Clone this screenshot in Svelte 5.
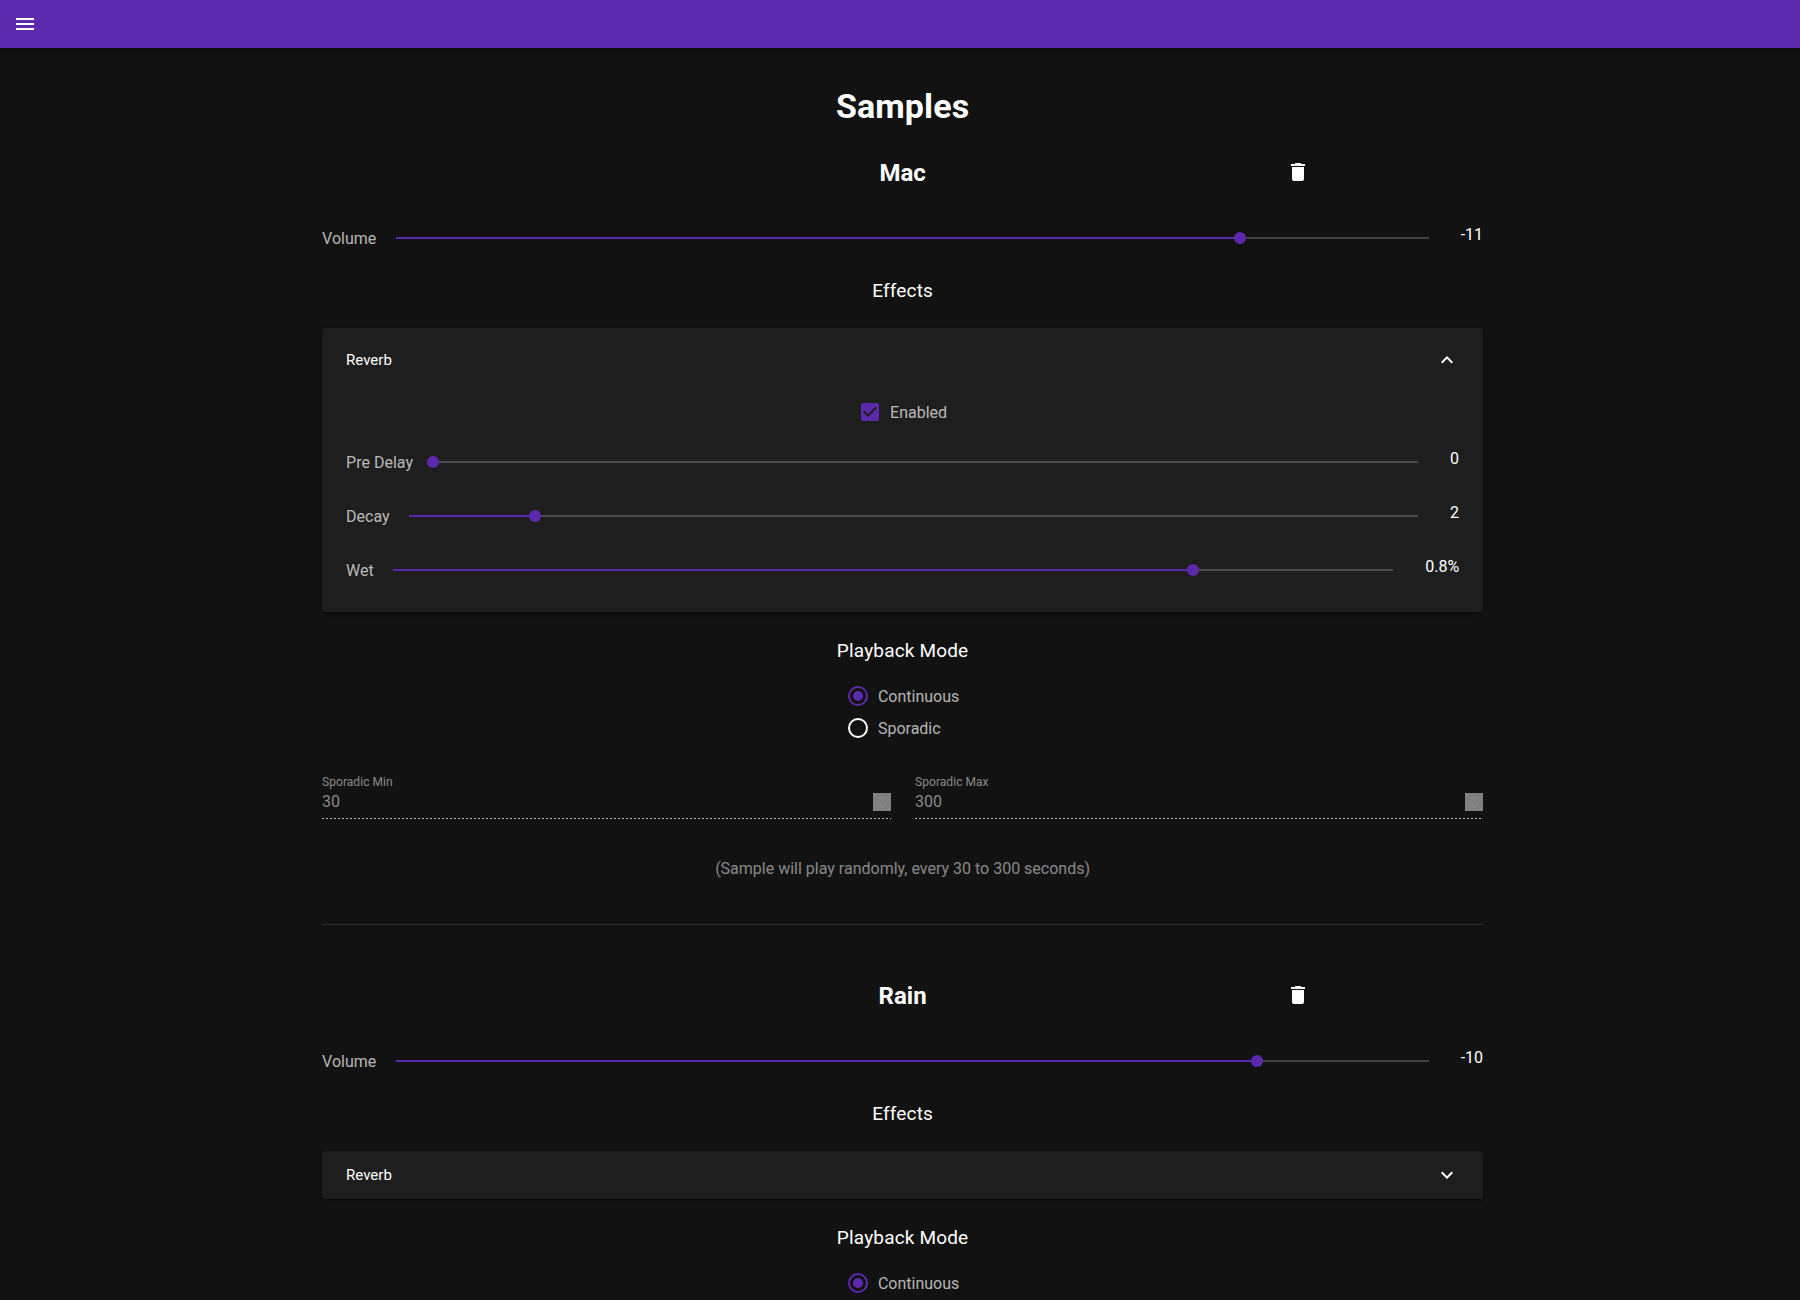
<script>
  const samples = [
    {
      name: 'Mac', volume: -11, pos: 81.72, open: true, details: true,
      effects: [
        { label: 'Pre Delay', value: '0', pos: 0 },
        { label: 'Decay', value: '2', pos: 12.5 },
        { label: 'Wet', value: '0.8%', pos: 80 }
      ]
    },
    { name: 'Rain', volume: -10, pos: 83.36, open: false, details: false, effects: [] }
  ];
</script>

{#snippet slider(label, value, pos)}
  <div class="slider">
    <span class="label">{label}</span>
    <div class="track">
      <div class="fill" style="width: {pos}%"></div>
      <div class="thumb" style="left: {pos}%"></div>
    </div>
    <span class="value">{value}</span>
  </div>
{/snippet}

{#snippet field(label, value)}
  <div class="field">
    <div class="field-label">{label}</div>
    <div class="field-row">
      <span>{value}</span>
      <svg class="spin" width="18" height="18" viewBox="0 0 18 18">
        <rect width="18" height="18" fill="#808081" />
        <path d="M6 6.500 9 3.500 12 6.500M6 11.500 9 14.500 12 11.500" fill="none" stroke="#8a8a93" stroke-width="1.300" />
      </svg>
    </div>
    <div class="dots"></div>
  </div>
{/snippet}

<header class="bar">
  <svg width="24" height="24" viewBox="0 0 24 24"><path d="M3,6H21V8H3V6M3,11H21V13H3V11M3,16H21V18H3V16Z" /></svg>
</header>

<main>
  <h1>Samples</h1>
  {#each samples as s}
    <section>
      <div class="title">
        <h2>{s.name}</h2>
        <button aria-label="Delete">
          <svg width="24" height="24" viewBox="0 0 24 24"><path d="M19,4H15.5L14.5,3H9.5L8.5,4H5V6H19M6,19A2,2 0 0,0 8,21H16A2,2 0 0,0 18,19V7H6V19Z" /></svg>
        </button>
      </div>
      {@render slider('Volume', s.volume, s.pos)}
      <h3 class="effects">Effects</h3>
      <div class="panel">
        <div class="panel-head" class:open={s.open}>
          <span>Reverb</span>
          <svg width="24" height="24" viewBox="0 0 24 24"><path d="M7.41,8.58L12,13.17L16.59,8.58L18,10L12,16L6,10L7.41,8.58Z" /></svg>
        </div>
        {#if s.open}
          <div class="panel-body">
            <div class="check">
              <svg width="24" height="24" viewBox="0 0 24 24"><path d="M10,17L5,12L6.41,10.58L10,14.17L17.59,6.58L19,8M19,3H5C3.89,3 3,3.89 3,5V19A2,2 0 0,0 5,21H19A2,2 0 0,0 21,19V5C21,3.89 20.1,3 19,3Z" /></svg>
              <span>Enabled</span>
            </div>
            {#each s.effects as e}
              {@render slider(e.label, e.value, e.pos)}
            {/each}
          </div>
        {/if}
      </div>
      <h3 class="mode">Playback Mode</h3>
      <div class="radios">
        <div class="radio on">
          <svg width="24" height="24" viewBox="0 0 24 24"><path d="M12,20A8,8 0 0,1 4,12A8,8 0 0,1 12,4A8,8 0 0,1 20,12A8,8 0 0,1 12,20M12,2A10,10 0 0,0 2,12A10,10 0 0,0 12,22A10,10 0 0,0 22,12A10,10 0 0,0 12,2M12,7A5,5 0 0,0 7,12A5,5 0 0,0 12,17A5,5 0 0,0 17,12A5,5 0 0,0 12,7Z" /></svg>
          <span>Continuous</span>
        </div>
        {#if s.details}
          <div class="radio">
            <svg width="24" height="24" viewBox="0 0 24 24"><path d="M12,20A8,8 0 0,1 4,12A8,8 0 0,1 12,4A8,8 0 0,1 20,12A8,8 0 0,1 12,20M12,2A10,10 0 0,0 2,12A10,10 0 0,0 12,22A10,10 0 0,0 22,12A10,10 0 0,0 12,2Z" /></svg>
            <span>Sporadic</span>
          </div>
        {/if}
      </div>
      {#if s.details}
        <div class="fields">
          {@render field('Sporadic Min', 30)}
          {@render field('Sporadic Max', 300)}
        </div>
        <p class="note">(Sample will play randomly, every 30 to 300 seconds)</p>
        <hr />
      {/if}
    </section>
  {/each}
</main>

<style>
  :global(body) {
    background: #121212;
    overflow: hidden;
  }
  :global(#app) {
    height: 1300px;
    overflow: hidden;
    font-family: Roboto, sans-serif;
    font-size: 16px;
    line-height: 24px;
    color: #fff;
  }
  svg {
    display: block;
    flex: none;
    fill: #fff;
  }
  .bar {
    height: 48px;
    box-sizing: border-box;
    padding: 12px 13px;
    background: #5b29ae;
    box-shadow: 0 2px 4px -1px rgba(0, 0, 0, 0.1), 0 4px 5px rgba(0, 0, 0, 0.05), 0 1px 10px rgba(0, 0, 0, 0.05);
  }
  main {
    width: 1161px;
    margin-left: 322.1px;
    padding-top: 38px;
  }
  h1, h2, h3, p {
    margin: 0;
    text-align: center;
  }
  h1 {
    font-size: 34px;
    line-height: 40px;
    font-weight: 700;
    letter-spacing: 0.1px;
  }
  section {
    height: 793px;
    padding-top: 30px;
  }
  .title {
    display: grid;
    grid-template: 32px / repeat(3, 1fr);
    align-items: center;
    margin: 0 -12px;
  }
  h2 {
    grid-column: 2;
    padding-top: 2px;
    font-size: 24px;
    line-height: 32px;
    font-weight: 700;
  }
  button {
    justify-self: center;
    padding: 0;
    border: 0;
    background: none;
  }
  .slider {
    display: flex;
    align-items: center;
    height: 32px;
  }
  .title + .slider {
    margin-top: 34px;
  }
  .label {
    margin-right: 19.7px;
    padding-top: 2px;
    color: rgba(255, 255, 255, 0.7);
  }
  .track {
    position: relative;
    flex: 1;
    height: 2px;
    background: rgba(255, 255, 255, 0.2);
  }
  .fill {
    height: 2px;
    background: #5b29ae;
  }
  .thumb {
    position: absolute;
    top: -5px;
    width: 12px;
    height: 12px;
    margin-left: -6px;
    border-radius: 50%;
    background: #5b29ae;
  }
  .value {
    margin-left: 32px;
    padding-bottom: 6px;
  }
  h3 {
    font-size: 19px;
    line-height: 32px;
    font-weight: 400;
    letter-spacing: 0.17px;
  }
  .effects {
    margin-top: 21px;
  }
  .panel {
    margin-top: 21px;
    border-radius: 4px;
    background: #1e1e1e;
    box-shadow: 0 3px 1px -2px rgba(0, 0, 0, 0.2), 0 2px 2px rgba(0, 0, 0, 0.14), 0 1px 5px rgba(0, 0, 0, 0.12);
  }
  .panel-head {
    display: flex;
    align-items: center;
    justify-content: space-between;
    height: 48px;
    padding: 0 24px;
    font-size: 15px;
  }
  .open {
    height: 64px;
  }
  .open svg {
    transform: rotate(180deg);
  }
  .panel-body {
    height: 212px;
    padding: 8px 24px 0;
  }
  .check {
    display: flex;
    justify-content: center;
    gap: 8px;
    height: 46px;
    color: rgba(255, 255, 255, 0.7);
  }
  .check span, .radio span {
    line-height: 26px;
    margin-bottom: -2px;
  }
  .check svg, .on svg {
    fill: #5b29ae;
  }
  .panel-body .slider + .slider {
    margin-top: 22px;
  }
  .mode {
    margin-top: 23px;
  }
  .radios {
    display: grid;
    width: max-content;
    gap: 8px;
    margin: 17px auto 0;
    color: rgba(255, 255, 255, 0.7);
  }
  .radio {
    display: flex;
    gap: 8px;
  }
  .fields {
    display: grid;
    grid-template-columns: 569px 1fr;
    gap: 24px;
    margin-top: 34px;
    color: rgba(255, 255, 255, 0.5);
  }
  .field-label {
    font-size: 12px;
    line-height: 16px;
    letter-spacing: 0.04px;
  }
  .field-row {
    display: flex;
    align-items: center;
    justify-content: space-between;
    height: 24px;
    padding-bottom: 4px;
  }
  .dots {
    height: 1px;
    background: repeating-linear-gradient(90deg, rgba(255, 255, 255, 0.7) 0 2px, transparent 2px 4px);
  }
  .note {
    margin-top: 38px;
    color: rgba(255, 255, 255, 0.5);
  }
  hr {
    height: 1px;
    margin: 43px 0 0;
    border: 0;
    background: rgba(255, 255, 255, 0.12);
  }
</style>
